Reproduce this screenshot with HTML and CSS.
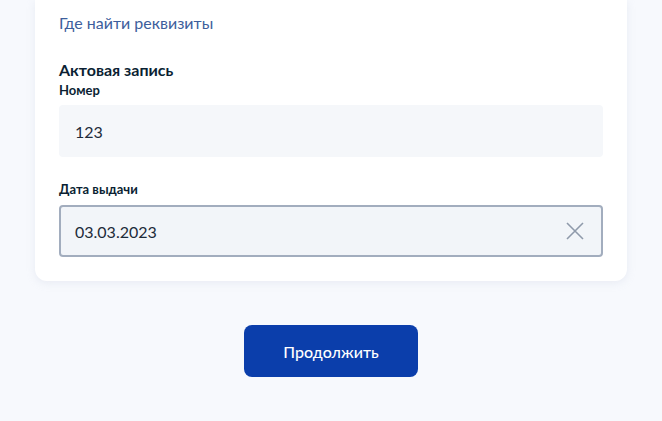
FILE: index.html
```html
<!DOCTYPE html>
<html lang="ru">
<head>
<meta charset="utf-8">
<link rel="stylesheet" href="styles.css">
</head>
<body>
<div class="page">
  <div class="card">
    <a class="link" href="#">Где найти реквизиты</a>
    <div class="section-title">Актовая запись</div>
    <div class="field">
      <div class="label">Номер</div>
      <div class="input">123</div>
    </div>
    <div class="field field-date">
      <div class="label">Дата выдачи</div>
      <div class="input input-focus">
        <span>03.03.2023</span>
        <svg class="clear" width="18" height="18" viewBox="0 0 18 18"><path d="M1 1L17 17M17 1L1 17" stroke="#8f9aab" stroke-width="1.6" fill="none"/></svg>
      </div>
    </div>
  </div>
  <div class="actions">
    <button class="btn">Продолжить</button>
  </div>
</div>
</body>
</html>
```
FILE: styles.css
```css
* { box-sizing: border-box; }
html, body { margin: 0; padding: 0; }
body {
  background: #f7f9fd;
  font-family: Lato, "Noto Sans", sans-serif;
  color: #0b1f33;
  height: 421px;
  overflow: hidden;
}
.page { padding: 0 35px; }
.card {
  background: #fff;
  border-radius: 0 0 12px 12px;
  box-shadow: 0 2px 8px rgba(180, 190, 210, 0.22);
  padding: 13px 24px 24px;
  display: flex;
  flex-direction: column;
}
.link {
  font-size: 16px;
  line-height: 20px;
  color: #3d5e9c;
  text-decoration: none;
}
.section-title {
  margin-top: 27px;
  font-size: 16px;
  line-height: 20px;
  font-weight: 700;
}
.field { display: flex; flex-direction: column; }
.field-date { margin-top: 24px; }
.label {
  font-size: 13px;
  line-height: 16px;
  font-weight: 700;
  margin-top: 2px;
  margin-bottom: 7px;
}
.field-date .label { margin-top: 0; margin-bottom: 8px; }
.input {
  height: 52px;
  background: #f5f7fa;
  border-radius: 4px;
  padding: 0 16px;
  display: flex;
  align-items: center;
  justify-content: space-between;
  font-size: 16px;
  color: #1d2b3a;
}
.input-focus {
  border: 2px solid #a2adbe;
  background: #f2f5f9;
  padding: 0 17px 0 14px;
  height: 52px;
}
.clear { display: block; }
.actions {
  display: flex;
  justify-content: center;
  margin-top: 44px;
}
.btn {
  width: 174px;
  height: 52px;
  border: 0;
  border-radius: 8px;
  background: #0b3eab;
  color: #fff;
  font-family: Lato, "Noto Sans", sans-serif;
  font-size: 16px;
  font-weight: 500;
}
```
